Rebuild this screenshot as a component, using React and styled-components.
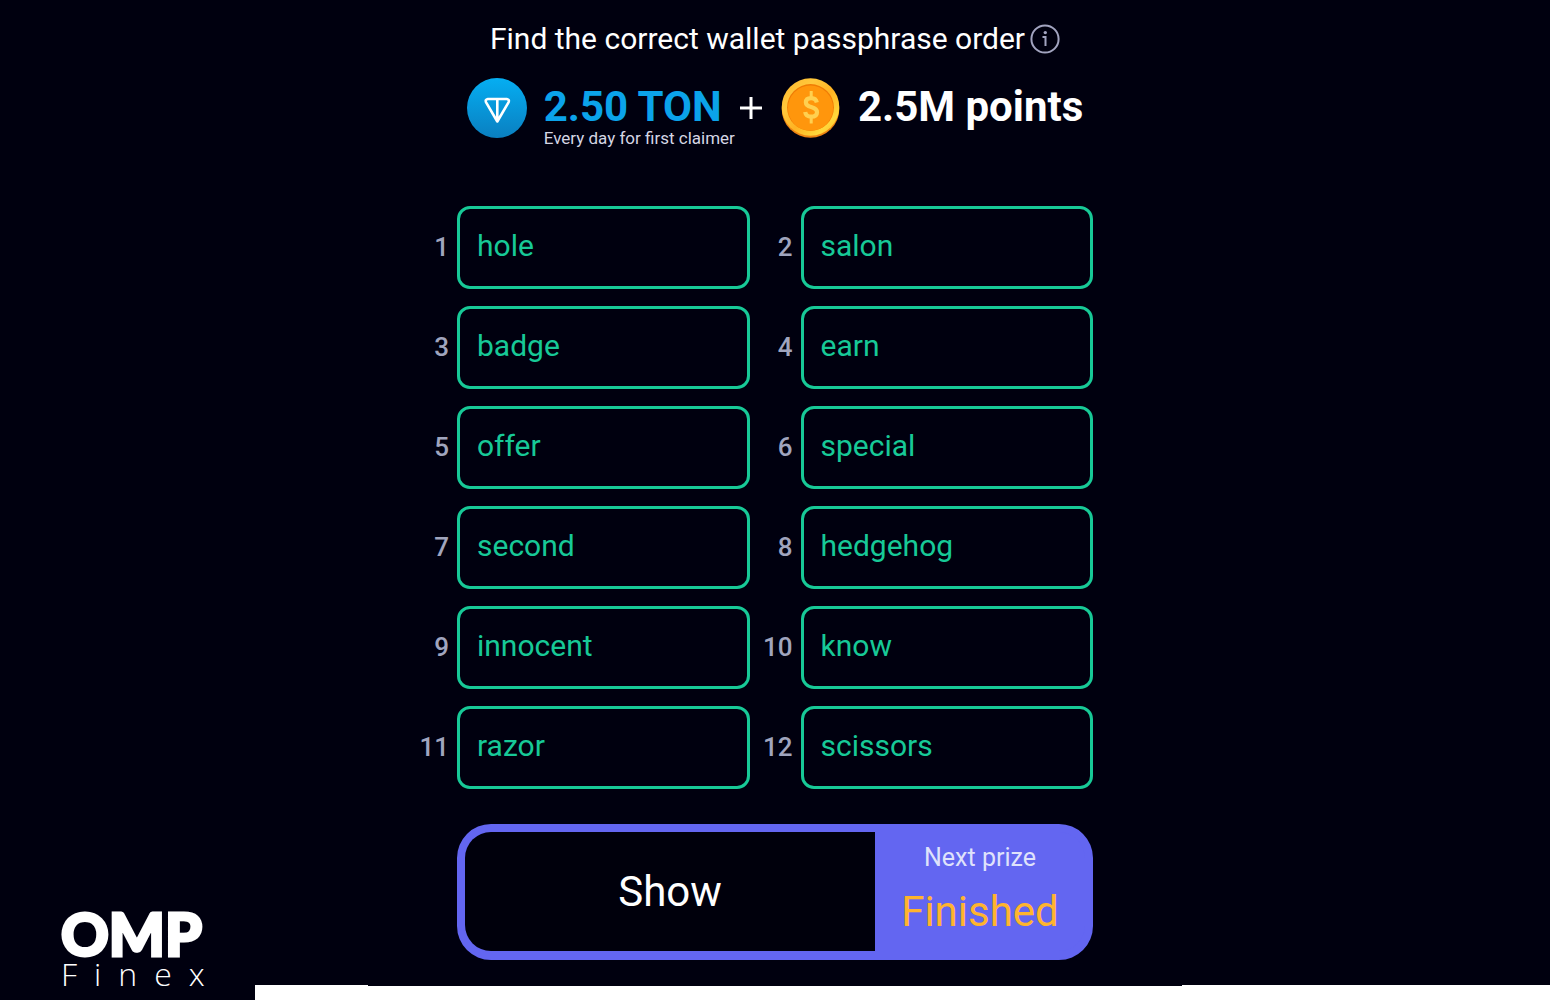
import React from 'react';
import styled, { createGlobalStyle } from 'styled-components';

const words = [
  'hole', 'salon',
  'badge', 'earn',
  'offer', 'special',
  'second', 'hedgehog',
  'innocent', 'know',
  'razor', 'scissors',
];

const GlobalStyle = createGlobalStyle`
  * {
    box-sizing: border-box;
  }
  body {
    margin: 0;
    background-color: #00000f;
    color: white;
    font-family: Roboto, sans-serif;
  }
`;

const Page = styled.div`
  display: grid;
  grid-template-columns: 1fr minmax(0, 720px) 1fr;
  grid-template-rows: 1fr auto;
  min-height: 100vh;
`;

const Main = styled.main`
  grid-column: 2;
  grid-row: 1;
  padding-top: 20px;
`;

const Title = styled.h1`
  display: flex;
  justify-content: center;
  align-items: center;
  gap: 5px;
  margin: 0;
  font-size: 30px;
  line-height: 38px;
  font-weight: 400;
`;

const InfoButton = styled.button`
  display: flex;
  padding: 0;
  border: none;
  background: none;
  color: #a2a4c0;
  cursor: pointer;
`;

const Prizes = styled.div`
  display: flex;
  justify-content: center;
  align-items: flex-start;
  margin-top: 20px;
  height: 128px;
  white-space: nowrap;
`;

const PrizeText = styled.div`
  padding-top: 4px;
  margin-left: ${props => props.gap}px;
`;

const Amount = styled.div`
  color: ${props => props.color};
  font-size: 42px;
  line-height: 50px;
  font-weight: 700;
`;

const Note = styled.div`
  color: #d5d6e4;
  font-size: 17px;
  line-height: 12px;
`;

const Plus = styled.svg`
  margin: 19px 18px 0 5px;
`;

const WordGrid = styled.ol`
  display: grid;
  grid-template-columns: repeat(2, minmax(0, 1fr));
  gap: 17px 9px;
  margin: 0;
  padding: 0 42px 0 0;
  list-style: none;
`;

const WordRow = styled.li`
  display: flex;
  align-items: center;
  gap: 8px;
`;

const WordNumber = styled.label`
  width: 34px;
  flex: none;
  padding-bottom: 2px;
  color: #a0a5be;
  font-size: 26px;
  font-weight: 500;
  text-align: right;
`;

const WordInput = styled.input`
  flex: 1;
  min-width: 0;
  height: 83px;
  padding: 0 17px 4px;
  border: 3px solid #17c997;
  border-radius: 13px;
  outline: none;
  background: transparent;
  color: #17c997;
  font-family: inherit;
  font-size: 30px;
`;

const ActionBar = styled.div`
  display: flex;
  height: 136px;
  margin: 35px 42px 0;
  border: solid #6366f1;
  border-width: 8px 8px 9px;
  border-radius: 34px;
  background-color: #6366f1;
`;

const ShowButton = styled.button`
  flex: 1;
  padding: 0;
  border: none;
  border-radius: 26px 0 0 26px;
  background-color: #00000c;
  color: white;
  font-family: inherit;
  font-size: 42px;
  cursor: pointer;
`;

const NextPrize = styled.div`
  width: 210px;
  text-align: center;
`;

const NextLabel = styled.div`
  margin-top: 10px;
  color: #dfe2fb;
  font-size: 25px;
  line-height: 32px;
`;

const NextStatus = styled.div`
  margin-top: 14px;
  color: #ffb42e;
  font-size: 42px;
  line-height: 48px;
`;

const Logo = styled.div`
  grid-column: 1;
  grid-row: 1 / 3;
  align-self: end;
  padding: 0 0 9px 61px;
`;

const LogoName = styled.div`
  font-family: Lato, sans-serif;
  font-size: 59px;
  font-weight: 900;
  line-height: 46px;
  -webkit-text-stroke: 3px white;
`;

const LogoSub = styled.div`
  font-family: "Open Sans", sans-serif;
  font-size: 32px;
  font-weight: 300;
  line-height: 34px;
  letter-spacing: 17px;
`;

const Strip = styled.footer`
  grid-column: 1 / 4;
  grid-row: 2;
  display: flex;
  align-items: flex-end;
  margin-left: 255px;
`;

const StripPart = styled.div`
  flex: ${props => props.flex};
  height: ${props => props.height}px;
  background-color: white;
`;

const InfoIcon = () => (
  <svg width="30" height="30" viewBox="0 0 30 30" fill="none" stroke="currentColor" strokeWidth="2">
    <circle cx="15" cy="15" r="13.6" />
    <path d="M12.5 13h3v9" />
    <circle cx="15.3" cy="8.6" r="1.7" fill="currentColor" stroke="none" />
  </svg>
);

const TonIcon = () => (
  <svg width="60" height="60" viewBox="0 0 60 60">
    <defs>
      <linearGradient id="ton" x1="0" y1="0" x2="0" y2="1">
        <stop offset="0" stopColor="#05aef2" />
        <stop offset="1" stopColor="#0a7fc0" />
      </linearGradient>
    </defs>
    <circle cx="30" cy="30" r="30" fill="url(#ton)" />
    <path
      d="M20.8 21h19q3 .5 1.7 3.4L30.3 43.5 19.1 24.4q-1.3-2.9 1.7-3.4zM30.3 21v21"
      fill="none"
      stroke="white"
      strokeWidth="2.6"
      strokeLinejoin="round"
    />
  </svg>
);

const CoinIcon = () => (
  <svg width="60" height="60" viewBox="0 0 60 60">
    <defs>
      <linearGradient id="rim" x1="0" y1="0" x2="1" y2="1">
        <stop offset="0" stopColor="#ffb52b" />
        <stop offset="0.3" stopColor="#ffc83c" />
        <stop offset="0.55" stopColor="#ffb322" />
        <stop offset="0.8" stopColor="#ffd83c" />
        <stop offset="1" stopColor="#ffb01c" />
      </linearGradient>
    </defs>
    <circle cx="30.5" cy="31" r="28.8" fill="#ee8412" />
    <circle cx="30.5" cy="29" r="28.8" fill="url(#rim)" />
    <circle cx="30.5" cy="29.5" r="23.4" fill="#f07c05" />
    <circle cx="30.5" cy="30.2" r="22.6" fill="#ff960c" />
    <path
      d="M36.8 24.5q-.8-4.3-5.6-4.3-5.3 0-5.3 4.3 0 3 5.3 4.5 5.8 1.6 5.8 5.2 0 4.5-5.8 4.5-5.3 0-6-4.7"
      fill="none"
      stroke="#ffd050"
      strokeWidth="4.2"
    />
    <path d="M31.2 13v7M31.2 39v6.5" stroke="#ffd050" strokeWidth="3" />
  </svg>
);

const App = () => (
  <Page>
    <GlobalStyle />
    <Main>
      <Title>
        Find the correct wallet passphrase order
        <InfoButton aria-label="Info"><InfoIcon /></InfoButton>
      </Title>
      <Prizes>
        <TonIcon />
        <PrizeText gap={17}>
          <Amount color="#0ba3ea">2.50 TON</Amount>
          <Note>Every day for first claimer</Note>
        </PrizeText>
        <Plus width="22" height="22" viewBox="0 0 22 22" stroke="white" strokeWidth="3">
          <path d="M11 0v22M0 11h22" />
        </Plus>
        <CoinIcon />
        <PrizeText gap={18}>
          <Amount color="white">2.5M points</Amount>
        </PrizeText>
      </Prizes>
      <WordGrid>
        {words.map((word, i) => (
          <WordRow key={word}>
            <WordNumber htmlFor={'word-' + i}>{i + 1}</WordNumber>
            <WordInput id={'word-' + i} defaultValue={word} />
          </WordRow>
        ))}
      </WordGrid>
      <ActionBar>
        <ShowButton>Show</ShowButton>
        <NextPrize>
          <NextLabel>Next prize</NextLabel>
          <NextStatus>Finished</NextStatus>
        </NextPrize>
      </ActionBar>
    </Main>
    <Logo>
      <LogoName>OMP</LogoName>
      <LogoSub>Finex</LogoSub>
    </Logo>
    <Strip>
      <StripPart flex="0 0 113px" height={15} />
      <StripPart flex="1" height={14} />
      <StripPart flex="0 0 368px" height={15} />
    </Strip>
  </Page>
);

export default App;
